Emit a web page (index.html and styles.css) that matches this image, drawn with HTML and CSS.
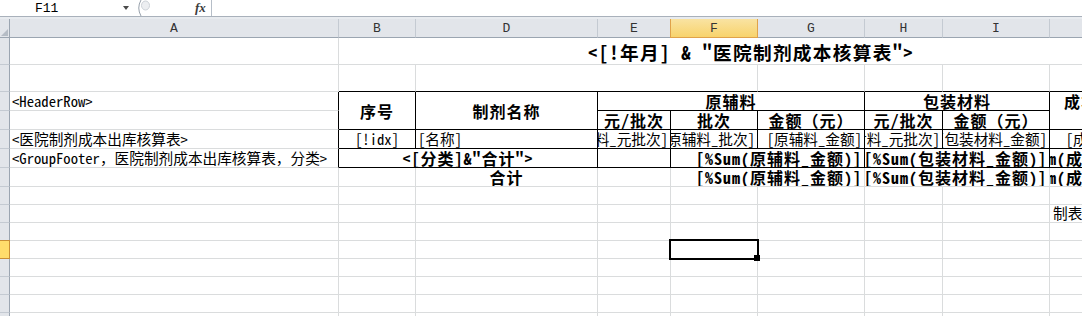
FILE: index.html
```html
<!DOCTYPE html>
<html lang="zh-CN">
<head>
    <meta charset="UTF-8">
    <title>医院制剂成本核算表</title>
    <link rel="stylesheet" href="styles.css">
</head>
<body>
    <div class="fbar">
        <div class="namebox"><span>F11</span><i class="caret"></i></div>
        <svg class="grip" width="16" height="16" viewBox="0 0 16 16">
            <path d="M6 0 Q1.5 8 6 16" fill="none" stroke="#98a1ac" stroke-width="1"/>
            <ellipse cx="10.5" cy="5.5" rx="4" ry="4.5" fill="#eceef1" stroke="#cdd2d8"/>
        </svg>
        <span class="fx">fx</span>
        <div class="formula"></div>
    </div>
    <div class="band"></div>

    <div class="sheet">
        <!-- column headers -->
        <div class="corner"></div>
        <div class="ch">A</div><div class="ch">B</div><div class="ch">D</div><div class="ch">E</div>
        <div class="ch sel">F</div><div class="ch">G</div><div class="ch">H</div><div class="ch">I</div><div class="ch">J</div>

        <!-- row 1 -->
        <div class="rh"></div>
        <div class="c"></div>
        <div class="c title span8"><span>&lt;[!年月] &amp; "医院制剂成本核算表"&gt;</span></div>

        <!-- row 2 -->
        <div class="rh"></div>
        <div class="c"></div>
        <div class="c tb"></div>
        <div class="c tb span3"></div>
        <div class="c tb"></div><div class="c tb"></div><div class="c tb"></div><div class="c tb"></div>

        <!-- row 3 -->
        <div class="rh"></div>
        <div class="c tr l"><span>&lt;HeaderRow&gt;</span></div>
        <div class="c t m b rows2"><span>序号</span></div>
        <div class="c t m b rows2"><span>制剂名称</span></div>
        <div class="c t m b span3"><span>原辅料</span></div>
        <div class="c t m b span2"><span>包装材料</span></div>
        <div class="c t m b rows2 top"><span>成本（元）</span></div>

        <!-- row 4 -->
        <div class="rh"></div>
        <div class="c tr"></div>
        <div class="c t m b"><span>元/批次</span></div>
        <div class="c t m b"><span>批次</span></div>
        <div class="c t m b"><span>金额（元）</span></div>
        <div class="c t m b"><span>元/批次</span></div>
        <div class="c t m b"><span>金额（元）</span></div>

        <!-- row 5 -->
        <div class="rh"></div>
        <div class="c tr l"><span>&lt;医院制剂成本出库核算表&gt;</span></div>
        <div class="c t m"><span>[!idx]</span></div>
        <div class="c t l"><span>[名称]</span></div>
        <div class="c t r"><span>[原辅料_元批次]</span></div>
        <div class="c t r"><span>[原辅料_批次]</span></div>
        <div class="c t r"><span>[原辅料_金额]</span></div>
        <div class="c t r"><span>[包装材料_元批次]</span></div>
        <div class="c t r"><span>[包装材料_金额]</span></div>
        <div class="c t r"><span>[成品_元批次]</span></div>

        <!-- row 6 -->
        <div class="rh"></div>
        <div class="c tr l"><span>&lt;GroupFooter，医院制剂成本出库核算表，分类&gt;</span></div>
        <div class="c t m b span2"><span>&lt;[分类]&amp;"合计"&gt;</span></div>
        <div class="c t"></div>
        <div class="c t r b span2"><span>[%Sum(原辅料_金额)]</span></div>
        <div class="c t r b span2"><span>[%Sum(包装材料_金额)]</span></div>
        <div class="c t r b"><span>[%Sum(成品_金额)]</span></div>

        <!-- row 7 -->
        <div class="rh"></div>
        <div class="c"></div>
        <div class="c"></div>
        <div class="c m b"><span>合计</span></div>
        <div class="c"></div>
        <div class="c r b span2"><span>[%Sum(原辅料_金额)]</span></div>
        <div class="c r b span2"><span>[%Sum(包装材料_金额)]</span></div>
        <div class="c r b"><span>[%Sum(成品_金额)]</span></div>

        <!-- row 8 -->
        <div class="rh"></div>
        <div class="c"></div><div class="c"></div><div class="c"></div><div class="c"></div><div class="c"></div>
        <div class="c"></div><div class="c"></div><div class="c"></div><div class="c"></div>

        <!-- row 9 -->
        <div class="rh"></div>
        <div class="c"></div><div class="c"></div><div class="c"></div><div class="c"></div><div class="c"></div>
        <div class="c"></div><div class="c"></div><div class="c"></div>
        <div class="c l sign"><span>制表人：</span></div>

        <!-- row 10 -->
        <div class="rh"></div>
        <div class="c"></div><div class="c"></div><div class="c"></div><div class="c"></div><div class="c"></div>
        <div class="c"></div><div class="c"></div><div class="c"></div><div class="c"></div>

        <!-- row 11, active cell F11 -->
        <div class="rh sel"></div>
        <div class="c"></div><div class="c"></div><div class="c"></div><div class="c"></div>
        <div class="c act"></div>
        <div class="c"></div><div class="c"></div><div class="c"></div><div class="c"></div>

        <!-- row 12 -->
        <div class="rh"></div>
        <div class="c"></div><div class="c"></div><div class="c"></div><div class="c"></div><div class="c"></div>
        <div class="c"></div><div class="c"></div><div class="c"></div><div class="c"></div>

        <!-- row 13 -->
        <div class="rh"></div>
        <div class="c"></div><div class="c"></div><div class="c"></div><div class="c"></div><div class="c"></div>
        <div class="c"></div><div class="c"></div><div class="c"></div><div class="c"></div>

        <!-- row 14 -->
        <div class="rh"></div>
        <div class="c"></div><div class="c"></div><div class="c"></div><div class="c"></div><div class="c"></div>
        <div class="c"></div><div class="c"></div><div class="c"></div><div class="c"></div>

        <!-- row 15 -->
        <div class="rh"></div>
        <div class="c"></div><div class="c"></div><div class="c"></div><div class="c"></div><div class="c"></div>
        <div class="c"></div><div class="c"></div><div class="c"></div><div class="c"></div>
    </div>
</body>
</html>
```

FILE: styles.css
```css
* {
    margin: 0;
    padding: 0;
    box-sizing: border-box;
}
body {
    width: 1082px;
    height: 316px;
    overflow: hidden;
    background-color: #fff;
    font-family: "Noto Sans Mono CJK SC", "Noto Sans CJK SC", monospace;
    color: #000;
}

/* formula bar */
.fbar {
    display: flex;
    align-items: center;
    height: 17px;
    border-bottom: 1px solid #a9b1bb;
}
.namebox {
    width: 133px;
    height: 16px;
    display: flex;
    align-items: center;
    padding-left: 35px;
    font-family: "Liberation Mono", monospace;
    font-size: 13px;
}
.caret {
    margin-left: auto;
    margin-right: 4px;
    border-left: 3px solid transparent;
    border-right: 3px solid transparent;
    border-top: 4px solid #4a4a4a;
}
.grip {
    margin-left: 2px;
}
.fx {
    margin-left: 44px;
    font-family: "Liberation Serif", serif;
    font-style: italic;
    font-weight: bold;
    font-size: 13px;
    color: #3c3c3c;
}
.formula {
    flex: 1;
    align-self: stretch;
    margin-left: 5px;
    border-left: 1px solid #b6bec8;
}
.band {
    height: 2px;
    background-color: #e8ebef;
}

/* sheet */
.sheet {
    display: grid;
    grid-template-columns: 10px 329px 77px 182px 73px 87px 107px 78px 107px 114px;
    grid-template-rows: 19px 27px 27px repeat(5, 19px) repeat(8, 18px);
    width: 1164px;
    font-size: 14.67px;
}
.corner {
    position: relative;
    background-color: #e2e5ea;
    border-right: 1px solid #9ba5b1;
    border-bottom: 1px solid #9ba5b1;
}
.corner::after {
    content: "";
    position: absolute;
    right: 1px;
    bottom: 1px;
    border-left: 7px solid transparent;
    border-bottom: 7px solid #b5bcc5;
}
.ch {
    display: flex;
    align-items: center;
    justify-content: center;
    background-color: #e2e5ea;
    border-right: 1px solid #c4cad2;
    border-bottom: 1px solid #9ba5b1;
    font-family: "Liberation Mono", monospace;
    font-size: 13px;
    color: #333;
}
.ch.sel {
    background: linear-gradient(#f9e3a2, #f8d36c);
    border-right-color: #e0a24a;
    border-bottom-color: #e0a24a;
    box-shadow: -1px 0 0 #e0a24a;
}
.rh {
    background-color: #e2e5ea;
    border-right: 1px solid #9ba5b1;
    border-bottom: 1px solid #c4cad2;
}
.rh.sel {
    background-color: #ffdc6b;
    border-right-color: #c98e35;
    border-bottom-color: #c98e35;
    box-shadow: 0 -1px 0 #c98e35;
}

.c {
    display: flex;
    align-items: center;
    overflow: hidden;
    white-space: nowrap;
    line-height: 1;
    border-right: 1px solid #dadcdd;
    border-bottom: 1px solid #dadcdd;
}
.c > span {
    flex-shrink: 0;
}
.l {
    padding-left: 2px;
}
.m {
    justify-content: center;
}
.r {
    justify-content: flex-end;
    padding-right: 2px;
}
.b {
    font-weight: bold;
    font-size: 16px;
    letter-spacing: 1px;
}
.top {
    align-items: flex-start;
    padding-top: 1px;
}
.sign {
    padding-left: 3px;
}

/* table borders */
.t {
    border-right-color: #000;
    border-bottom-color: #000;
}
.tr {
    border-right-color: #000;
}
.tb {
    border-bottom-color: #000;
}

/* merged cells */
.span2 {
    grid-column: span 2;
}
.span3 {
    grid-column: span 3;
}
.span8 {
    grid-column: span 8;
}
.rows2 {
    grid-row: span 2;
}

.title {
    justify-content: center;
    padding-top: 2px;
    font-size: 18.67px;
    font-weight: bold;
    letter-spacing: 1.3px;
}

/* active cell */
.act {
    position: relative;
    overflow: visible;
    z-index: 1;
}
.act::before,
.act::after {
    content: "";
    position: absolute;
    box-sizing: border-box;
}
.act::before {
    left: -2px;
    top: -2px;
    width: 90px;
    height: 21px;
    border: 2px solid #000;
}
.act::after {
    left: 83px;
    top: 14px;
    width: 6px;
    height: 6px;
    background-color: #000;
}
```
